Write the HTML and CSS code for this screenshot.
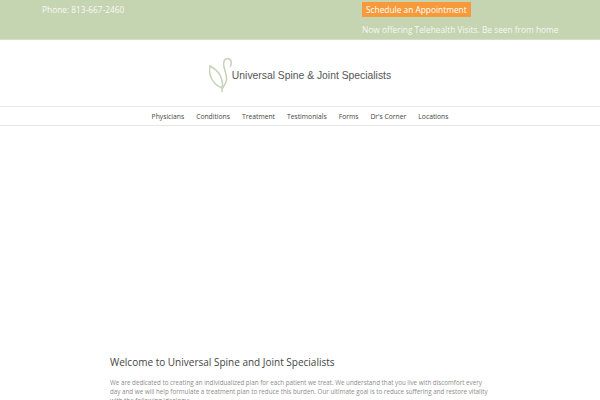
FILE: index.html
```html
<!DOCTYPE html>
<html lang="en">
<head>
<meta charset="utf-8">
<title>Universal Spine &amp; Joint Specialists</title>
<link rel="stylesheet" href="styles.css">
</head>
<body>
<header class="topbar">
  <div class="topbar-left">Phone: 813-667-2460</div>
  <div class="topbar-right">
    <a class="cta" href="#">Schedule an Appointment</a>
    <p class="tele">Now offering Telehealth Visits. Be seen from home</p>
  </div>
</header>
<div class="brand">
  <a class="logo" href="#">
    <svg class="logo-mark" width="24" height="36" viewBox="0 0 24 36" fill="none" aria-hidden="true">
      <path d="M1 9 C-1 17 3 27 13 31 C15 24 11 14 1 9 Z" stroke="#c5d3b6" stroke-width="1.5"/>
      <path d="M21 10 C23 8 23 2 19 1.5 C15 1 14 6 15 10 C16 15 19 20 17 25 C16 28 14 30 13 32 L13 35" stroke="#c5d3b6" stroke-width="1.5"/>
    </svg>
    <span class="logo-text">Universal Spine &amp; Joint Specialists</span>
  </a>
</div>
<nav class="nav">
  <a href="#">Physicians</a>
  <a href="#">Conditions</a>
  <a href="#">Treatment</a>
  <a href="#">Testimonials</a>
  <a href="#">Forms</a>
  <a href="#">Dr's Corner</a>
  <a href="#">Locations</a>
</nav>
<div class="hero"></div>
<main class="content">
  <h1>Welcome to Universal Spine and Joint Specialists</h1>
  <p>We are dedicated to creating an individualized plan for each patient we treat. We understand that you live with discomfort every day and we will help formulate a treatment plan to reduce this burden. Our ultimate goal is to reduce suffering and restore vitality with the following ideology:</p>
</main>
</body>
</html>
```
FILE: styles.css
```css
html, body { margin: 0; padding: 0; height: 400px; overflow: hidden; background: #fff; }
body { font-family: "Open Sans", sans-serif; color: #666; }
a { color: inherit; text-decoration: none; }
p { margin: 0; }

.topbar {
  height: 40px;
  background: #c5d4b1;
  color: #fff;
  display: grid;
  grid-template-columns: 320px 1fr;
  font-size: 8.35px;
  box-sizing: border-box;
  padding-left: 42px;
  overflow: hidden;
  border-bottom: 1px solid #d4dfc6;
}
.topbar-left { line-height: 19px; opacity: .9; }
.cta {
  display: inline-block;
  background: #f79a3c;
  padding: 0 4px;
  line-height: 15px;
  margin-top: 2px;
}
.tele { margin-top: 6px; line-height: 14px; opacity: .85; }

.brand {
  height: 67px;
  display: flex;
  justify-content: center;
  align-items: center;
  border-bottom: 1px solid #ececec;
  box-sizing: border-box;
  padding-top: 3px;
}
.logo { display: flex; align-items: center; gap: 0; }
.logo-mark { display: block; margin-right: -1px; }
.logo-text { font-family: "Liberation Sans", Arial, sans-serif; font-size: 10.35px; color: #555; margin-top: 2px; }

.nav {
  height: 19px;
  display: flex;
  justify-content: center;
  align-items: center;
  gap: 12px;
  font-size: 6.75px;
  color: #444;
  border-bottom: 1px solid #e6e6e6;
  box-sizing: border-box;
}

.hero { height: 228px; }

.content { width: 381px; margin-left: 110px; }
h1 { margin: 0 0 9px; font-size: 10px; font-weight: 400; color: #444; line-height: 16px; }
.content p { font-size: 6.25px; line-height: 8.8px; color: #8c8c8c; }
```
